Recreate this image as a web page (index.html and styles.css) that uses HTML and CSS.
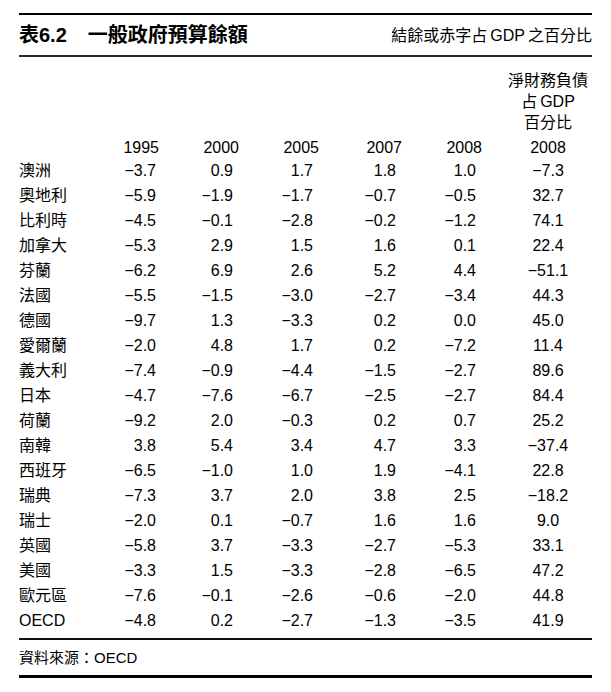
FILE: index.html
```html
<!DOCTYPE html>
<html lang="zh-Hant">
<head>
<meta charset="utf-8">
<title>表6.2 一般政府預算餘額</title>
<link rel="stylesheet" href="styles.css">
</head>
<body>
<div class="page">
  <header class="title-bar">
    <h1 class="title"><span class="title-num">表6.2</span><span>一般政府預算餘額</span></h1>
    <span class="unit">結餘或赤字占<span class="latin">GDP</span>之百分比</span>
  </header>

  <div class="table">
    <div class="row head-sup">
      <div class="cell last">淨財務負債<br>占<span class="latin-l">GDP</span><br>百分比</div>
    </div>
    <div class="row years">
      <div class="cell name"></div>
      <div class="cell num y1">1995</div>
      <div class="cell num">2000</div>
      <div class="cell num">2005</div>
      <div class="cell num">2007</div>
      <div class="cell num">2008</div>
      <div class="cell last">2008</div>
    </div>
    <div class="row"><div class="cell name">澳洲</div><div class="cell num">−3.7</div><div class="cell num">0.9</div><div class="cell num">1.7</div><div class="cell num">1.8</div><div class="cell num">1.0</div><div class="cell last">−7.3</div></div>
    <div class="row"><div class="cell name">奧地利</div><div class="cell num">−5.9</div><div class="cell num">−1.9</div><div class="cell num">−1.7</div><div class="cell num">−0.7</div><div class="cell num">−0.5</div><div class="cell last">32.7</div></div>
    <div class="row"><div class="cell name">比利時</div><div class="cell num">−4.5</div><div class="cell num">−0.1</div><div class="cell num">−2.8</div><div class="cell num">−0.2</div><div class="cell num">−1.2</div><div class="cell last">74.1</div></div>
    <div class="row"><div class="cell name">加拿大</div><div class="cell num">−5.3</div><div class="cell num">2.9</div><div class="cell num">1.5</div><div class="cell num">1.6</div><div class="cell num">0.1</div><div class="cell last">22.4</div></div>
    <div class="row"><div class="cell name">芬蘭</div><div class="cell num">−6.2</div><div class="cell num">6.9</div><div class="cell num">2.6</div><div class="cell num">5.2</div><div class="cell num">4.4</div><div class="cell last">−51.1</div></div>
    <div class="row"><div class="cell name">法國</div><div class="cell num">−5.5</div><div class="cell num">−1.5</div><div class="cell num">−3.0</div><div class="cell num">−2.7</div><div class="cell num">−3.4</div><div class="cell last">44.3</div></div>
    <div class="row"><div class="cell name">德國</div><div class="cell num">−9.7</div><div class="cell num">1.3</div><div class="cell num">−3.3</div><div class="cell num">0.2</div><div class="cell num">0.0</div><div class="cell last">45.0</div></div>
    <div class="row"><div class="cell name">愛爾蘭</div><div class="cell num">−2.0</div><div class="cell num">4.8</div><div class="cell num">1.7</div><div class="cell num">0.2</div><div class="cell num">−7.2</div><div class="cell last">11.4</div></div>
    <div class="row"><div class="cell name">義大利</div><div class="cell num">−7.4</div><div class="cell num">−0.9</div><div class="cell num">−4.4</div><div class="cell num">−1.5</div><div class="cell num">−2.7</div><div class="cell last">89.6</div></div>
    <div class="row"><div class="cell name">日本</div><div class="cell num">−4.7</div><div class="cell num">−7.6</div><div class="cell num">−6.7</div><div class="cell num">−2.5</div><div class="cell num">−2.7</div><div class="cell last">84.4</div></div>
    <div class="row"><div class="cell name">荷蘭</div><div class="cell num">−9.2</div><div class="cell num">2.0</div><div class="cell num">−0.3</div><div class="cell num">0.2</div><div class="cell num">0.7</div><div class="cell last">25.2</div></div>
    <div class="row"><div class="cell name">南韓</div><div class="cell num">3.8</div><div class="cell num">5.4</div><div class="cell num">3.4</div><div class="cell num">4.7</div><div class="cell num">3.3</div><div class="cell last">−37.4</div></div>
    <div class="row"><div class="cell name">西班牙</div><div class="cell num">−6.5</div><div class="cell num">−1.0</div><div class="cell num">1.0</div><div class="cell num">1.9</div><div class="cell num">−4.1</div><div class="cell last">22.8</div></div>
    <div class="row"><div class="cell name">瑞典</div><div class="cell num">−7.3</div><div class="cell num">3.7</div><div class="cell num">2.0</div><div class="cell num">3.8</div><div class="cell num">2.5</div><div class="cell last">−18.2</div></div>
    <div class="row"><div class="cell name">瑞士</div><div class="cell num">−2.0</div><div class="cell num">0.1</div><div class="cell num">−0.7</div><div class="cell num">1.6</div><div class="cell num">1.6</div><div class="cell last">9.0</div></div>
    <div class="row"><div class="cell name">英國</div><div class="cell num">−5.8</div><div class="cell num">3.7</div><div class="cell num">−3.3</div><div class="cell num">−2.7</div><div class="cell num">−5.3</div><div class="cell last">33.1</div></div>
    <div class="row"><div class="cell name">美國</div><div class="cell num">−3.3</div><div class="cell num">1.5</div><div class="cell num">−3.3</div><div class="cell num">−2.8</div><div class="cell num">−6.5</div><div class="cell last">47.2</div></div>
    <div class="row"><div class="cell name">歐元區</div><div class="cell num">−7.6</div><div class="cell num">−0.1</div><div class="cell num">−2.6</div><div class="cell num">−0.6</div><div class="cell num">−2.0</div><div class="cell last">44.8</div></div>
    <div class="row"><div class="cell name">OECD</div><div class="cell num">−4.8</div><div class="cell num">0.2</div><div class="cell num">−2.7</div><div class="cell num">−1.3</div><div class="cell num">−3.5</div><div class="cell last">41.9</div></div>
  </div>

  <footer class="source">資料來源：OECD</footer>
</div>
</body>
</html>
```

FILE: styles.css
```css
* {
  box-sizing: border-box;
}

html, body {
  margin: 0;
  padding: 0;
  background: #fff;
}

body {
  font-family: "Liberation Sans", "Noto Sans CJK TC", sans-serif;
  color: #000;
  font-size: 16px;
}

.page {
  width: 573px;
  margin-left: 19px;
  padding-top: 13px;
}

.title-bar {
  display: flex;
  align-items: center;
  justify-content: space-between;
  height: 44px;
  border-top: 2px solid #000;
  border-bottom: 2px solid #2a2a2a;
}

.title {
  margin: 0;
  font-size: 20px;
  font-weight: 700;
  line-height: 24px;
  color: #000;
}

.title-num {
  margin-right: 21px;
}

.unit {
  font-size: 16px;
  line-height: 20px;
  margin-right: 0;
  margin-top: 2px;
}

.latin {
  margin: 0 3px;
}

.latin-l {
  margin-left: 3px;
}

.table {
  padding-top: 13px;
}

.row {
  display: grid;
  grid-template-columns: 97px 40px 77px 80px 83px 80px 116px;
  height: 25px;
  line-height: 25px;
  white-space: nowrap;
}

.row.head-sup {
  height: auto;
  line-height: 21px;
}

.head-sup .last {
  grid-column: 7;
}

.row.years {
  height: 25px;
  line-height: 21px;
  padding-top: 4px;
}

.cell.name {
  text-align: left;
}

.cell.num {
  text-align: right;
}

.years .cell.num {
  margin-right: -6px;
}

.years .cell.num.y1 {
  margin-right: -3px;
}

.cell.last {
  text-align: center;
  padding-left: 28px;
}

.source {
  margin-top: 5px;
  border-top: 2px solid #111;
  border-bottom: 3px solid #000;
  height: 40px;
  line-height: 35px;
  font-size: 15px;
}
```
